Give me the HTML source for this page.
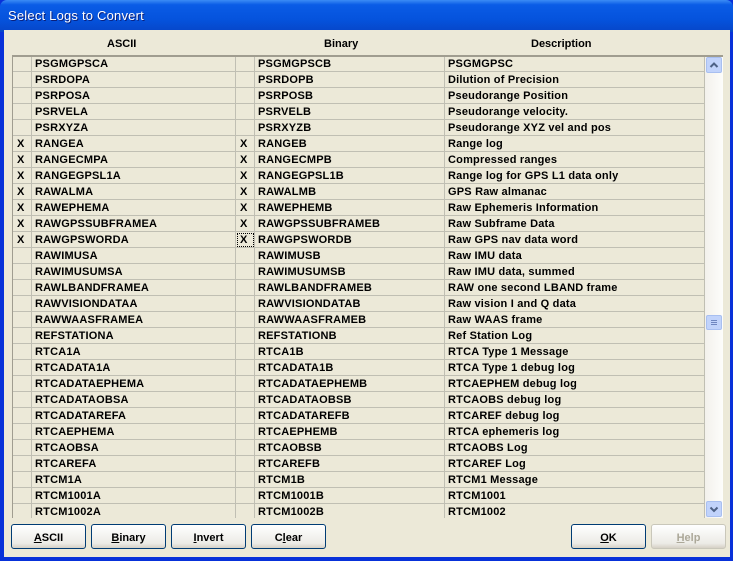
<!DOCTYPE html><html><head><style>
*{margin:0;padding:0;box-sizing:border-box}
body{width:733px;height:561px;overflow:hidden;background:#0831d9;font-family:"Liberation Sans",sans-serif;font-weight:bold;font-size:11px;position:relative}
.title{position:absolute;left:0;top:0;width:733px;height:32px;background:linear-gradient(#3b8cf5 0%,#0a5ce6 15%,#0553dd 60%,#0646c8 100%);border-radius:7px 7px 0 0}
.title span{position:absolute;left:8px;top:8px;color:#fff;font-size:13px;font-weight:normal;letter-spacing:0.2px;text-shadow:1px 1px #0a1f7a}
.client{position:absolute;left:4px;top:30px;width:726px;height:527px;background:#ece9d8}
.hdr{position:absolute;top:38px;font-size:11px;color:#000}
.grid{position:absolute;left:12px;top:55px;width:711px;height:463px;border-top:2px solid #a09d90;border-left:1px solid #a09d90;overflow:hidden;background:#ece9d8}
.row{position:absolute;left:0;height:16px;width:692px;border-bottom:1px solid #c0bfb3}
.c{position:absolute;top:0;height:16px;line-height:16px;border-right:1px solid #c0bfb3;padding-left:3px;white-space:nowrap;overflow:hidden;letter-spacing:0.2px}
.sb{position:absolute;left:692px;top:0;width:18px;height:463px;background:linear-gradient(90deg,#f3f1ec,#fdfdfb)}
.sbb{position:absolute;left:693px;width:16px;height:16px;background:#c1d3fb;border:1px solid #a8bff0;border-radius:2px}
.sbb svg{position:absolute;left:0;top:0}
.btn{position:absolute;top:524px;height:25px;border:1px solid #003c74;border-radius:3px;background:linear-gradient(#fff,#ecebe6 80%,#d6d0c5);text-align:center;line-height:26px;font-size:11px}
.btn u{text-decoration:underline}
</style></head><body>
<div class="title"><span>Select Logs to Convert</span></div>
<div class="client"></div>
<div class="hdr" style="left:107px">ASCII</div>
<div class="hdr" style="left:324px">Binary</div>
<div class="hdr" style="left:531px">Description</div>
<div class="grid" id="g"></div>
<div class="btn" style="left:11px;width:75px"><u>A</u>SCII</div>
<div class="btn" style="left:91px;width:75px"><u>B</u>inary</div>
<div class="btn" style="left:171px;width:75px"><u>I</u>nvert</div>
<div class="btn" style="left:251px;width:75px">C<u>l</u>ear</div>
<div class="btn" style="left:571px;width:75px"><u>O</u>K</div>
<div class="btn" style="left:651px;width:75px;color:#aca899;border-color:#c9c7ba"><u>H</u>elp</div>
<script>
var d=[["","PSGMGPSCA","","PSGMGPSCB","PSGMGPSC"],["","PSRDOPA","","PSRDOPB","Dilution of Precision"],["","PSRPOSA","","PSRPOSB","Pseudorange Position"],["","PSRVELA","","PSRVELB","Pseudorange velocity."],["","PSRXYZA","","PSRXYZB","Pseudorange XYZ vel and pos"],["X","RANGEA","X","RANGEB","Range log"],["X","RANGECMPA","X","RANGECMPB","Compressed ranges"],["X","RANGEGPSL1A","X","RANGEGPSL1B","Range log for GPS L1 data only"],["X","RAWALMA","X","RAWALMB","GPS Raw almanac"],["X","RAWEPHEMA","X","RAWEPHEMB","Raw Ephemeris Information"],["X","RAWGPSSUBFRAMEA","X","RAWGPSSUBFRAMEB","Raw Subframe Data"],["X","RAWGPSWORDA","X","RAWGPSWORDB","Raw GPS nav data word"],["","RAWIMUSA","","RAWIMUSB","Raw IMU data"],["","RAWIMUSUMSA","","RAWIMUSUMSB","Raw IMU data, summed"],["","RAWLBANDFRAMEA","","RAWLBANDFRAMEB","RAW one second LBAND frame"],["","RAWVISIONDATAA","","RAWVISIONDATAB","Raw vision I and Q data"],["","RAWWAASFRAMEA","","RAWWAASFRAMEB","Raw WAAS frame"],["","REFSTATIONA","","REFSTATIONB","Ref Station Log"],["","RTCA1A","","RTCA1B","RTCA Type 1 Message"],["","RTCADATA1A","","RTCADATA1B","RTCA Type 1 debug log"],["","RTCADATAEPHEMA","","RTCADATAEPHEMB","RTCAEPHEM debug log"],["","RTCADATAOBSA","","RTCADATAOBSB","RTCAOBS debug log"],["","RTCADATAREFA","","RTCADATAREFB","RTCAREF debug log"],["","RTCAEPHEMA","","RTCAEPHEMB","RTCA ephemeris log"],["","RTCAOBSA","","RTCAOBSB","RTCAOBS Log"],["","RTCAREFA","","RTCAREFB","RTCAREF Log"],["","RTCM1A","","RTCM1B","RTCM1 Message"],["","RTCM1001A","","RTCM1001B","RTCM1001"],["","RTCM1002A","","RTCM1002B","RTCM1002"]];
var cols=[[0,19],[19,204],[223,19],[242,190],[432,260]],h="";
d.forEach(function(r,i){h+='<div class="row" style="top:'+(i*16-1)+'px">';r.forEach(function(t,j){var p=j%2==0&&j<4?'padding-left:4px;':'';var ex=(i==11&&j==2)?'outline:1px dotted #000;outline-offset:-2px;':'';h+='<div class="c" style="left:'+cols[j][0]+'px;width:'+cols[j][1]+'px;'+p+ex+'">'+t+'</div>'});h+='</div>'});
var up='<svg width="14" height="14"><path d="M3.5 9 L7 5.5 L10.5 9" fill="none" stroke="#4d6185" stroke-width="2"/></svg>';
var dn='<svg width="14" height="14"><path d="M3.5 5.5 L7 9 L10.5 5.5" fill="none" stroke="#4d6185" stroke-width="2"/></svg>';
var th='<svg width="14" height="13"><path d="M4 4.5h6M4 6.5h6M4 8.5h6" stroke="#6f86c0" stroke-width="1"/></svg>';
h+='<div class="sb"></div><div class="sbb" style="top:0">'+up+'</div><div class="sbb" style="top:258px;height:15px">'+th+'</div><div class="sbb" style="top:444px">'+dn+'</div>';
document.getElementById('g').innerHTML=h;
</script>
</body></html>
